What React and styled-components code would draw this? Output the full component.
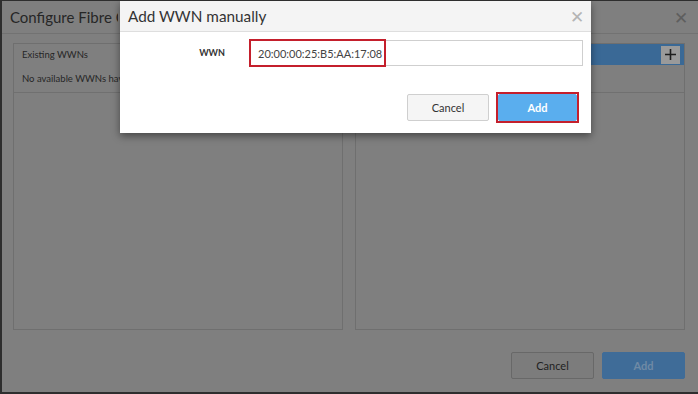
import React from "react";
import styled, { createGlobalStyle } from "styled-components";

const Global = createGlobalStyle`
  html, body { margin: 0; padding: 0; background: #2b2b2b; }
  body { font-family: Lato, "Open Sans", "Liberation Sans", sans-serif; }
  * { box-sizing: border-box; }
`;

const Screen = styled.div`
  position: relative;
  width: 698px;
  height: 394px;
  background: #7f7f7f;
  border-left: 2px solid #2e2e2e;
  border-top: 1px solid #2e2e2e;
  border-bottom: 2px solid #2e2e2e;
  display: flex;
  flex-direction: column;
  overflow: hidden;
`;

const BgHeader = styled.div`
  height: 33px;
  flex: none;
  display: flex;
  align-items: center;
  justify-content: space-between;
  padding: 0 10px 0 8px;
  border-bottom: 1px solid #727272;
`;

const BgTitle = styled.div`
  font-size: 15px;
  color: #262626;
  white-space: nowrap;
  width: 108px;
  overflow: hidden;
`;

const CloseX = styled.span`
  font-size: 17px;
  line-height: 1;
  color: ${(p) => p.$color};
  font-weight: 300;
`;

const BgBody = styled.div`
  display: grid;
  grid-template-columns: 330px 330px;
  column-gap: 12px;
  padding: 9px 0 0 11px;
  height: 296px;
  flex: none;
`;

const Panel = styled.div`
  border: 1px solid #6f6f6f;
  display: flex;
  flex-direction: column;
`;

const PanelHead = styled.div`
  height: 21px;
  display: flex;
  align-items: center;
  justify-content: space-between;
  padding: 0 4px 0 8px;
  font-size: 9.5px;
  color: #262626;
  background: ${(p) => (p.$blue ? "#3a6996" : "transparent")};
`;

const PanelRow = styled.div`
  height: 28px;
  display: flex;
  align-items: center;
  padding-left: 8px;
  font-size: 9.5px;
  color: #262626;
  border-bottom: 1px solid #707070;
`;

const Clip = styled.span`
  display: block;
  width: 98px;
  white-space: nowrap;
  overflow: hidden;
`;

const PlusBtn = styled.div`
  width: 19px;
  height: 18px;
  background: #9a9a9a;
  display: flex;
  align-items: center;
  justify-content: center;
`;

const BgFooter = styled.div`
  display: flex;
  justify-content: flex-end;
  gap: 8px;
  padding: 22px 13px 0 0;
`;

const Btn = styled.button`
  width: ${(p) => p.$w || 83}px;
  height: 27px;
  font-family: inherit;
  font-size: 11px;
  font-weight: ${(p) => (p.$primary ? 700 : 400)};
  border-radius: 2px;
  border: 1px solid ${(p) => p.$border};
  background: ${(p) => p.$bg};
  color: ${(p) => p.$color};
  padding: 0;
  cursor: pointer;
`;

const Modal = styled.div`
  position: absolute;
  left: 118px;
  top: 0;
  width: 471px;
  height: 132px;
  background: #fff;
  box-shadow: 0 3px 8px rgba(0, 0, 0, 0.45);
  display: flex;
  flex-direction: column;
`;

const ModalHeader = styled.div`
  height: 31px;
  background: #f4f4f4;
  border-bottom: 1px solid #dedede;
  display: flex;
  align-items: center;
  justify-content: space-between;
  padding: 0 7px 0 8px;
`;

const ModalTitle = styled.div`
  font-size: 15.3px;
  color: #333;
`;

const FieldRow = styled.div`
  display: flex;
  align-items: center;
  margin-top: 8px;
  height: 26px;
`;

const Label = styled.label`
  width: 105px;
  text-align: right;
  font-size: 9px;
  font-weight: 700;
  color: #333;
  padding-bottom: 2px;
`;

const InputWrap = styled.div`
  position: relative;
  margin-left: 25px;
  width: 333px;
  height: 26px;
`;

const Input = styled.input`
  width: 100%;
  height: 100%;
  border: 1px solid #cfcfcf;
  font-family: inherit;
  font-size: 11px;
  color: #444;
  padding: 0 0 0 7px;
  outline: none;
`;

const Highlight = styled.div`
  position: absolute;
  left: -1px;
  top: -1px;
  width: 137px;
  height: 28px;
  border: 2px solid #c41f2c;
  pointer-events: none;
`;

const ModalFooter = styled.div`
  display: flex;
  justify-content: flex-end;
  align-items: center;
  gap: 7px;
  padding: 26px 12px 0 0;
`;

const HighlightBox = styled.div`
  border: 2px solid #c41f2c;
  display: flex;
`;

const PlusIcon = () => (
  <svg width="13" height="13" viewBox="0 0 13 13">
    <path d="M6.5 1v11M1 6.5h11" stroke="#1e1e1e" strokeWidth="1.6" />
  </svg>
);

export default function App() {
  return (
    <>
      <Global />
      <Screen>
        <BgHeader>
          <BgTitle>Configure Fibre Channel</BgTitle>
          <CloseX $color="#5e5e5e">✕</CloseX>
        </BgHeader>
        <BgBody>
          <Panel>
            <PanelHead>Existing WWNs</PanelHead>
            <PanelRow>
              <Clip>No available WWNs have been found</Clip>
            </PanelRow>
          </Panel>
          <Panel>
            <PanelHead $blue>
              <span />
              <PlusBtn>
                <PlusIcon />
              </PlusBtn>
            </PanelHead>
            <PanelRow />
          </Panel>
        </BgBody>
        <BgFooter>
          <Btn $bg="#7c7c7c" $border="#686868" $color="#222">Cancel</Btn>
          <Btn $primary $bg="#3f6c98" $border="#3f6c98" $color="#6f8aa5">Add</Btn>
        </BgFooter>

        <Modal>
          <ModalHeader>
            <ModalTitle>Add WWN manually</ModalTitle>
            <CloseX $color="#b5b5b5">✕</CloseX>
          </ModalHeader>
          <FieldRow>
            <Label>WWN</Label>
            <InputWrap>
              <Input defaultValue="20:00:00:25:B5:AA:17:08" />
              <Highlight />
            </InputWrap>
          </FieldRow>
          <ModalFooter>
            <Btn $w={82} $bg="#f5f5f5" $border="#cfcfcf" $color="#333">Cancel</Btn>
            <HighlightBox>
              <Btn $w={79} $primary $bg="#5aaeee" $border="#5aaeee" $color="#fff">Add</Btn>
            </HighlightBox>
          </ModalFooter>
        </Modal>
      </Screen>
    </>
  );
}
